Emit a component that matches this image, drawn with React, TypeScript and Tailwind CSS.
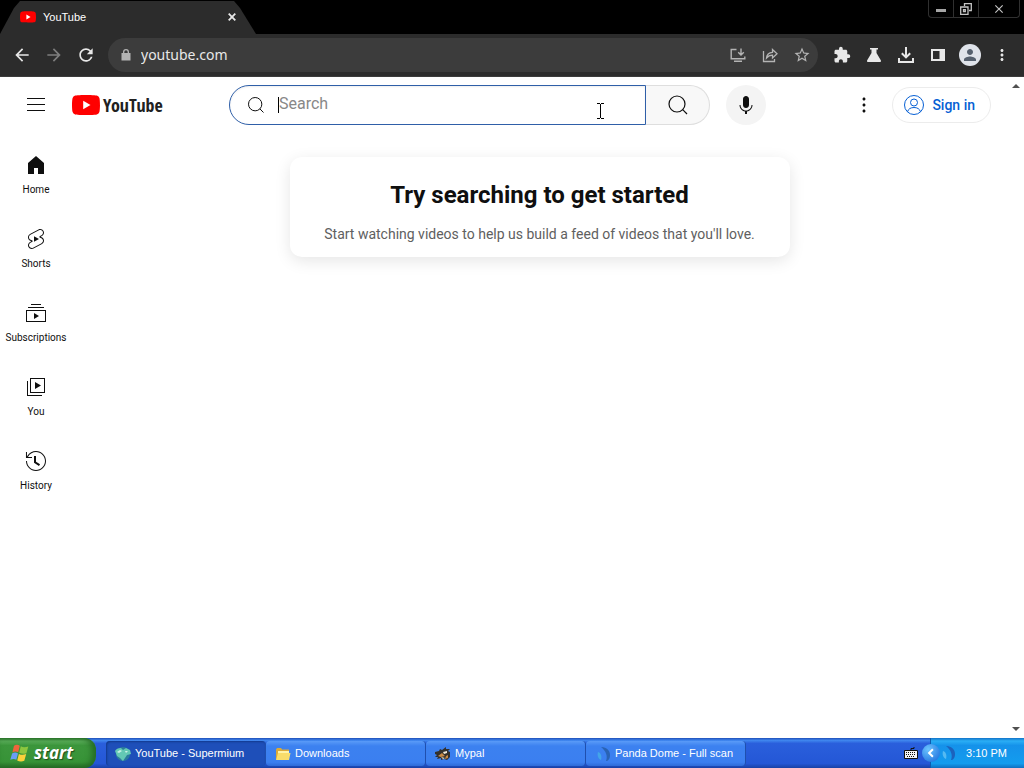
import React from "react";
import {
  MdArrowBack,
  MdArrowForward,
  MdClose,
  MdExtension,
  MdMoreVert,
  MdPerson,
  MdRefresh,
  MdStarBorder,
} from "react-icons/md";

const paths = {
  menu: "M21 6H3V5h18v1zm0 5H3v1h18v-1zm0 6H3v1h18v-1z",
  mic: "M12 3c-1.66 0-3 1.37-3 3.07v5.86c0 1.7 1.34 3.07 3 3.07s3-1.37 3-3.07V6.07C15 4.37 13.66 3 12 3zm6.5 9h-1c0 3.03-2.47 5.5-5.5 5.5S6.5 15.03 6.5 12h-1c0 3.24 2.39 5.93 5.5 6.41V21h2v-2.59c3.11-.48 5.5-3.17 5.5-6.41z",
  dots: "M12 16.5c.83 0 1.5.67 1.5 1.5s-.67 1.5-1.5 1.5-1.5-.67-1.5-1.5.67-1.5 1.5-1.5zM10.5 12c0 .83.67 1.5 1.5 1.5s1.5-.67 1.5-1.5-.67-1.5-1.5-1.5-1.5.67-1.5 1.5zm0-6c0 .83.67 1.5 1.5 1.5s1.5-.67 1.5-1.5-.67-1.5-1.5-1.5-1.5.67-1.5 1.5z",
};

const navItems = [
  { label: "Home", d: "M4 10V21h6v-6h4v6h6V10L12 3 4 10z" },
  {
    label: "Shorts",
    d: "M10 14.65v-5.3L15 12l-5 2.65zm7.77-4.33-1.2-.5L18 9.06c1.84-.96 2.53-3.23 1.56-5.06s-3.24-2.53-5.07-1.56L6 6.94c-1.29.68-2.07 2.04-2 3.49.07 1.42.93 2.67 2.22 3.25.03.01 1.2.5 1.2.5L6 14.93c-1.83.97-2.53 3.24-1.56 5.07.97 1.83 3.24 2.53 5.07 1.56l8.5-4.5c1.29-.68 2.06-2.04 1.99-3.49-.07-1.42-.94-2.68-2.23-3.25zm-.23 5.86-8.5 4.5c-1.34.71-3.01.2-3.72-1.14-.71-1.34-.2-3.01 1.14-3.72l2.04-1.08v-1.21l-.69-.28-1.11-.46c-.99-.41-1.65-1.35-1.7-2.41-.05-1.06.52-2.06 1.46-2.56l8.5-4.5c1.34-.71 3.01-.2 3.72 1.14.71 1.34.2 3.01-1.14 3.72L15.5 9.26v1.21l1.8.74c.99.41 1.65 1.35 1.7 2.41.05 1.06-.52 2.06-1.46 2.56z",
  },
  {
    label: "Subscriptions",
    d: "M10 18v-6l5 3-5 3zm7-15H7v1h10V3zm3 3H4v1h16V6zm2 3H2v12h20V9zM3 10h18v10H3V10z",
  },
  {
    label: "You",
    d: "M11 7l6 3.5L11 14V7zm7 13H4V6H3v15h15v-1zm3-2H6V3h15v15zM7 17h13V4H7v13z",
  },
  {
    label: "History",
    d: "M14.97 16.95 10 13.87V7h2v5.76l4.03 2.49-1.06 1.7zM22 12c0 5.51-4.49 10-10 10S2 17.51 2 12h1c0 4.96 4.04 9 9 9s9-4.04 9-9-4.04-9-9-9C8.81 3 5.92 4.64 4.28 7.38c-.11.18-.22.37-.31.56L3.94 8H8v1H1.96V3h1v4.74c.04-.09.07-.17.11-.25.11-.22.23-.42.35-.63C5.22 3.86 8.51 2 12 2c5.51 0 10 4.49 10 10z",
  },
];

const Icon: React.FC<{ d: string }> = ({ d }) => (
  <svg viewBox="0 0 24 24" fill="currentColor" className="size-6">
    <path d={d} />
  </svg>
);

const SearchIcon: React.FC<{ className: string }> = ({ className }) => (
  <svg viewBox="0 0 24 24" fill="none" stroke="currentColor" strokeWidth="1.2" className={className}>
    <circle cx="11" cy="11" r="8" />
    <path d="m16.700 16.700 4.300 4.300" />
  </svg>
);

const YouTubeMark: React.FC<{ className: string }> = ({ className }) => (
  <svg viewBox="0 0 28 20" className={className}>
    <path
      fill="#f00"
      d="M27.4 3.1A3.5 3.5 0 0 0 24.9.6C22.7 0 14 0 14 0S5.3 0 3.1.6A3.5 3.5 0 0 0 .6 3.1C0 5.3 0 10 0 10s0 4.7.6 6.9a3.5 3.5 0 0 0 2.5 2.5C5.3 20 14 20 14 20s8.7 0 10.9-.6a3.5 3.5 0 0 0 2.5-2.5C28 14.7 28 10 28 10s0-4.7-.6-6.9Z"
    />
    <path fill="#fff" d="M11.2 14.2 18.5 10l-7.3-4.2Z" />
  </svg>
);

const TitleBar: React.FC = () => (
  <div className="flex h-[34px] shrink-0 items-start justify-between bg-black text-white">
    <div className="flex h-[34px] w-64 items-center bg-[#2c2c2c] pr-4 pl-5 [clip-path:polygon(0_100%,14px_8px,20px_1px,234px_1px,240px_8px,100%_100%)]">
      <YouTubeMark className="h-3 w-4" />
      <span className="ml-[7px] flex-1 text-[11px]">YouTube</span>
      <button aria-label="Close tab" className="flex size-4 items-center justify-center">
        <svg viewBox="0 0 8 8" className="size-2" stroke="#e8e8e8" strokeWidth="1.8">
          <path d="m.7.7 6.600 6.600M7.300.7.7 7.300" />
        </svg>
      </button>
    </div>
    <div className="mr-1 flex h-[18px] divide-x divide-[#303030] rounded-b-sm border border-t-0 border-[#303030] text-[#c4c4c4]">
      <button aria-label="Minimize" className="flex w-[25px] items-center justify-center pt-1">
        <span className="h-[3px] w-[10px] bg-[#a5a5a5]" />
      </button>
      <button aria-label="Restore" className="flex w-[25px] items-center justify-center">
        <svg viewBox="0 0 12 12" className="size-3" fill="none" stroke="currentColor" strokeWidth="1.3">
          <path d="M4.5 3V.7h6.800v6.800H9M.7 4h7.300v7.300H.7zM3.500 6.700h1.800v1.800H3.500z" />
        </svg>
      </button>
      <button aria-label="Close window" className="flex w-10 items-center justify-center">
        <MdClose className="size-[14px]" />
      </button>
    </div>
  </div>
);

const Toolbar: React.FC = () => (
  <div className="flex h-[43px] shrink-0 items-center border-b border-[#3c3c3c] bg-[#2c2c2c] px-[6px] text-[#e8e8e8]">
    <button aria-label="Back" className="flex w-8 justify-center">
      <MdArrowBack className="size-5" />
    </button>
    <button aria-label="Forward" className="flex w-8 justify-center text-[#7d7d7d]">
      <MdArrowForward className="size-5" />
    </button>
    <button aria-label="Reload" className="flex w-8 justify-center">
      <MdRefresh className="size-5" />
    </button>
    <div className="mx-[6px] flex h-[34px] flex-1 items-center rounded-full bg-[#3c3c3c] pl-3 text-[#b4b4b4]">
      <svg viewBox="0 0 12 14" className="h-[14px] w-3" fill="currentColor">
        <path
          fillRule="evenodd"
          d="M3 5V4a3 3 0 0 1 6 0v1h1.500v7.500h-9V5Zm1.300 0h3.400V4a1.700 1.700 0 0 0-3.400 0Z"
        />
      </svg>
      <input
        aria-label="Address"
        defaultValue="youtube.com"
        className="ml-[9px] min-w-0 flex-1 bg-transparent font-['Noto_Sans',sans-serif] text-[14px] leading-5 text-[#e8e8e8] outline-none"
      />
      <button aria-label="Install YouTube" className="flex w-8 justify-center">
        <svg viewBox="0 0 16 16" className="size-4" fill="none" stroke="currentColor" strokeWidth="1.4">
          <path d="M6.500 2.500H1.200v9.300h13.600V9.500M4 14.200h8M11 1.500v6M8.200 5.200 11 8l2.800-2.800" />
        </svg>
      </button>
      <button aria-label="Share" className="flex w-8 justify-center">
        <svg viewBox="0 0 16 16" className="size-4" fill="none" stroke="currentColor" strokeWidth="1.3">
          <path d="M1.500 4v10.500h11V12M4.500 11c.3-3.500 2.500-5.500 6-5.700V2.500L15 6.700l-4.500 4.200V8.200c-2.600 0-4.500.9-6 2.800Z" />
        </svg>
      </button>
      <button aria-label="Bookmark" className="flex w-8 justify-center">
        <MdStarBorder className="size-[18px]" />
      </button>
    </div>
    <button aria-label="Extensions" className="ml-[2px] flex w-8 justify-center">
      <MdExtension className="size-[18px]" />
    </button>
    <button aria-label="Experiments" className="flex w-8 justify-center">
      <svg viewBox="0 0 16 16" className="size-4" fill="currentColor">
        <path d="M4 1h8v1.600h-1.500V6l4.300 7.200c.5.900 0 1.800-1 1.800H2.200c-1 0-1.500-.9-1-1.800L5.500 6V2.600H4Z" />
      </svg>
    </button>
    <button aria-label="Downloads" className="flex w-8 justify-center">
      <svg viewBox="0 0 16 16" className="size-4" fill="none" stroke="currentColor" strokeWidth="2">
        <path d="M8 0v10M3.800 6.200 8 10.400l4.200-4.200M1 11v4h14v-4" />
      </svg>
    </button>
    <button aria-label="Side panel" className="flex w-8 justify-center">
      <svg viewBox="0 0 14 14" className="size-[14px]" fill="currentColor">
        <path fillRule="evenodd" d="M0 1h14v12H0ZM2 3v8h6.500V3Z" />
      </svg>
    </button>
    <button aria-label="Profile" className="flex w-8 justify-center">
      <span className="flex size-[22px] items-center justify-center rounded-full bg-[#dfe3ea] text-[#55606e]">
        <MdPerson className="size-[18px]" />
      </span>
    </button>
    <button aria-label="Browser menu" className="flex w-8 justify-center">
      <MdMoreVert className="size-[18px]" />
    </button>
  </div>
);

const Header: React.FC = () => (
  <header className="flex h-14 items-center pr-4">
    <div className="flex w-[229px] shrink-0 items-center pl-4">
      <button aria-label="Guide" className="flex size-10 items-center justify-center">
        <Icon d={paths.menu} />
      </button>
      <a href="#home" className="ml-4 flex items-center gap-[3px]">
        <YouTubeMark className="h-5 w-7" />
        <span className="font-['Noto_Sans_ExtraCondensed','Open_Sans_Condensed','Liberation_Sans_Narrow',sans-serif] text-[18px] leading-6 font-bold text-[#212121]">
          YouTube
        </span>
      </a>
    </div>
    <div className="flex max-w-[537px] flex-1 items-center">
      <form className="flex h-10 flex-1" onSubmit={(e) => e.preventDefault()}>
        <div className="relative flex flex-1 items-center rounded-l-full border border-[#2f5fa8] pl-4 shadow-[inset_0_1px_2px_#eeeeee]">
          <SearchIcon className="size-5" />
          <span className="ml-3 h-4 w-px bg-black" />
          <input
            aria-label="Search"
            placeholder="Search"
            className="min-w-0 flex-1 bg-transparent pb-[2px] text-base outline-none placeholder:text-[#888]"
          />
          {/* text cursor */}
          <svg viewBox="0 0 7 16" className="absolute right-[41px] bottom-[5px] h-4 w-[7px]" fill="none" stroke="#000">
            <path d="M0 .5h3M4 .5h3M3.500 1v14M0 15.500h3M4 15.500h3" />
          </svg>
        </div>
        <button
          aria-label="Submit search"
          className="flex w-16 items-center justify-center rounded-r-full border border-l-0 border-[#dedede] bg-[#f8f8f8]"
        >
          <SearchIcon className="size-6" />
        </button>
      </form>
      <button
        aria-label="Search with your voice"
        className="ml-4 flex size-10 items-center justify-center rounded-full bg-[#f4f4f4]"
      >
        <Icon d={paths.mic} />
      </button>
    </div>
    <div className="ml-auto flex items-center gap-2">
      <button aria-label="Settings" className="flex size-10 items-center justify-center">
        <Icon d={paths.dots} />
      </button>
      <a
        href="#signin"
        className="flex h-9 items-center gap-[6px] rounded-full border border-[#ececec] pr-[15px] pl-[9px] text-sm font-medium text-[#065fd4]"
      >
        <svg viewBox="0 0 24 24" className="size-6" fill="none" stroke="currentColor">
          <circle cx="12" cy="12" r="9.5" />
          <circle cx="12" cy="9.5" r="3.5" />
          <path d="M5.500 18.800c.8-3 3.300-4.300 6.500-4.300s5.700 1.300 6.500 4.300" />
        </svg>
        Sign in
      </a>
    </div>
  </header>
);

const Sidebar: React.FC = () => (
  <nav className="flex w-[72px] shrink-0 flex-col pt-1">
    {navItems.map((item) => (
      <a
        key={item.label}
        href={`#${item.label.toLowerCase()}`}
        className="flex flex-col items-center gap-[6px] pt-4 pb-[14px] text-[10px] leading-[14px]"
      >
        <Icon d={item.d} />
        {item.label}
      </a>
    ))}
  </nav>
);

const taskClass =
  "flex w-40 items-center gap-1 rounded-sm border-r border-[#1f4fae] pl-[9px] text-left";
const idleTask = "bg-[linear-gradient(#5a9bf8,#3c81f0_20%,#3b7ff0_85%,#2f6bd8)]";

const Taskbar: React.FC = () => (
  <footer className="flex h-[30px] shrink-0 bg-[linear-gradient(#1f4fb8,#3f86ee_8%,#2a5fdc_18%,#2457d6_85%,#1941a5)] text-[11px] text-white">
    <button className="flex w-24 items-center gap-1 rounded-r-xl bg-[linear-gradient(#2f7a2f,#5cb05c_10%,#3c963c_25%,#379337_80%,#256b25)] pl-[10px] shadow-[inset_-4px_0_6px_#246b24]">
      <svg viewBox="0 0 20 18" className="h-[18px] w-5">
        <path fill="#f0643c" d="M4 1.800C6 .4 8 .6 9.800 1.700L8.200 8.300C6.300 7.100 4.300 7.200 2.400 8.400Z" />
        <path fill="#8cc63f" d="M10.800 2.200c2 1.200 4.400 1.300 7.500.2l-1.900 6.800c-2.400 1-5 .6-7.200-.5Z" />
        <path fill="#6a9df5" d="M2.100 9.400c2-1.100 4-1.200 5.900 0l-1.700 6.400c-1.800-1.200-3.800-1.200-6 0Z" />
        <path fill="#fbd13b" d="M8.900 9.900c2.200 1.100 4.600 1.200 7.300.2l-1.900 6.600c-2.400 1-4.900.9-7.100-.3Z" />
      </svg>
      <span className="font-['Open_Sans',sans-serif] text-[17px] leading-6 font-bold italic [text-shadow:1px_1px_1px_#1d4d1d]">
        start
      </span>
    </button>
    <div className="ml-[10px] flex flex-1 pt-[3px] pb-[2px]">
      <button className={`${taskClass} bg-[#1e4fb9] shadow-[inset_1px_1px_2px_#123a8c]`}>
        <svg viewBox="0 0 16 16" className="size-4">
          <circle cx="8" cy="8" r="7" fill="#2b7c9c" />
          <path fill="#63c9b4" d="M0 5c1-2 3-3 6-3l2 2 3-2 4 2 1 4-4 1-2 3-2 3-3-3-3-2Z" />
          <path fill="#c9f2e6" d="M2 6l3-2 2 1-3 2ZM10 5l3 0-2 2Z" />
        </svg>
        YouTube - Supermium
      </button>
      <button className={`${taskClass} ${idleTask}`}>
        <svg viewBox="0 0 16 16" className="size-4">
          <path fill="#d9a93a" d="M1 3.500 2 2h4l1.200 1.500H14V14H2L1 13Z" />
          <path fill="#fff3a8" d="M3 5h11v3H3Z" />
          <path fill="#f8dc6a" d="M1 14 3 7h12.500L14 14Z" />
        </svg>
        Downloads
      </button>
      <button className={`${taskClass} ${idleTask}`}>
        <svg viewBox="0 0 16 16" className="size-4">
          <path fill="#33302c" d="M0 6l4-1 1-2 2 1 4-3 0 2 4 0-2 2 2 1v5l-3 3-3-1-3 1 0-2-4 1 1-2-3 0 2-2-2-1Z" />
          <path fill="#c98a45" d="m3 10 4-3 3 3-4 1ZM11 10l2-1v3l-3 1Z" />
          <path fill="#f2ead8" d="m8 6 4-1v2l-3 1ZM6 11l4 1-2 1Z" />
        </svg>
        Mypal
      </button>
      <button className={`${taskClass} ${idleTask}`}>
        <svg viewBox="0 0 16 16" className="size-4">
          <path fill="#2a63b4" d="M6 1c6 0 9 4 9 8s-2 6-4 6c2-5 0-10-5-14Z" />
          <path fill="#43a5e8" d="M3 6c3 1 4 4 3 8-3-1-4-5-3-8Z" />
        </svg>
        Panda Dome - Full scan
      </button>
    </div>
    <svg viewBox="0 0 14 12" className="mr-3 h-3 w-[14px] self-center">
      <path fill="none" stroke="#111" d="M7 4V1.500h3V0" />
      <path fill="#f4f4f4" stroke="#111" d="M.5 3.500h13v8H.5Z" />
      <path stroke="#111" strokeDasharray="1 1" d="M2 5.500h10M2 7.500h10M3 9.500h8" />
    </svg>
    <div className="flex items-center bg-[linear-gradient(#1273c8,#2aaef5_10%,#1592ea_25%,#139cee_85%,#0f6fc0)] pr-[17px] shadow-[inset_1px_0_0_#0e5cae]">
      <button
        aria-label="Show hidden icons"
        className="-ml-2 flex size-[18px] items-center justify-center rounded-full bg-[radial-gradient(circle_at_35%_30%,#6cc4ff,#1565d8)]"
      >
        <svg viewBox="0 0 8 8" className="size-[10px]" fill="none" stroke="#fff" strokeWidth="1.6">
          <path d="M5.500 1 2.500 4l3 3" />
        </svg>
      </button>
      <svg viewBox="0 0 16 16" className="size-4">
        <path fill="#1c62bd" d="M6 1c6 0 9 4 9 8s-2 6-4 6c2-5 0-10-5-14Z" />
        <path fill="#55baf2" d="M3 6c3 1 4 4 3 8-3-1-4-5-3-8Z" />
      </svg>
      <time className="ml-[10px]">3:10 PM</time>
    </div>
  </footer>
);

const App: React.FC = () => {
  return (
    <div className="flex h-screen flex-col bg-white font-[Tahoma,'Liberation_Sans',sans-serif]">
      <TitleBar />
      <Toolbar />
      <div className="flex min-h-0 flex-1 font-[Roboto,sans-serif] text-[#0f0f0f]">
        <div className="flex min-w-0 flex-1 flex-col">
          <Header />
          <div className="flex flex-1">
            <Sidebar />
            <main className="flex flex-1 flex-col items-center px-4 pt-6">
              <section className="w-full max-w-[500px] rounded-xl px-6 pt-[22px] pb-3 text-center shadow-[0_4px_16px_rgba(0,0,0,0.1)]">
                <h1 className="text-2xl leading-8 font-bold">Try searching to get started</h1>
                <p className="mt-3 text-sm leading-[22px] text-[#606060]">
                  Start watching videos to help us build a feed of videos that you'll love.
                </p>
              </section>
            </main>
          </div>
        </div>
        {/* page scrollbar */}
        <div className="flex w-[17px] shrink-0 flex-col items-center justify-between py-[7px] text-[#505050]">
          <svg viewBox="0 0 8 4" className="h-1 w-2" fill="currentColor">
            <path d="M0 4 4 0l4 4Z" />
          </svg>
          <svg viewBox="0 0 8 4" className="h-1 w-2" fill="currentColor">
            <path d="M0 0h8L4 4Z" />
          </svg>
        </div>
      </div>
      <Taskbar />
    </div>
  );
};

export default App;
